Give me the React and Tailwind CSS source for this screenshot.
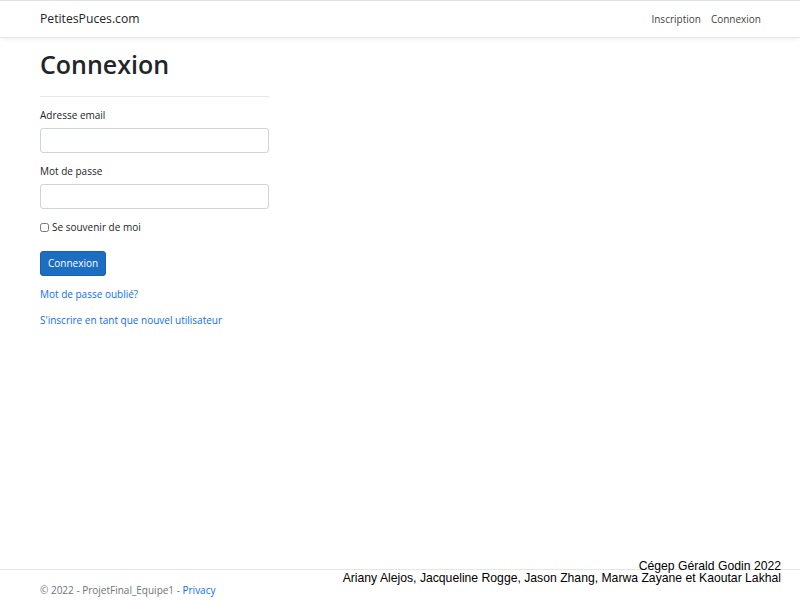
import React from "react";

export default function App() {
  return (
    <div className="relative min-h-[600px] flex flex-col bg-white text-[#212529] font-['Open_Sans',sans-serif]">
      <header className="h-[38px] border-t border-[#dee2e6] border-b border-b-[#e5e5e5] shadow-[0_2px_4px_rgba(0,0,0,0.05)] flex items-center justify-between pl-[40px] pr-[39px]">
        <span className="text-[12.2px] text-[#212529]">PetitesPuces.com</span>
        <nav className="flex gap-[10px] text-[10px] text-[#444]">
          <span>Inscription</span>
          <span>Connexion</span>
        </nav>
      </header>

      <main className="flex-1 px-[40px]">
        <div className="w-[229px]">
          <h1 className="text-[25px] font-semibold leading-none mt-[14px] mb-[19px]">Connexion</h1>
          <hr className="border-[#e7e7e7]" />
          <label className="block text-[10px] mt-[11px] mb-[5px]">Adresse email</label>
          <input className="w-full h-[25px] border border-[#ced4da] rounded-[3px]" />
          <label className="block text-[10px] mt-[11px] mb-[5px]">Mot de passe</label>
          <input type="password" className="w-full h-[25px] border border-[#ced4da] rounded-[3px]" />
          <label className="flex items-center gap-[3px] text-[10px] mt-[11px]">
            <input type="checkbox" className="w-[9px] h-[9px] m-0" />
            Se souvenir de moi
          </label>
          <button className="mt-[16px] h-[25px] px-[7px] rounded-[3px] bg-[#1b6ec2] border border-[#1861ac] text-white text-[10px]">
            Connexion
          </button>
          <a className="block text-[10px] text-[#0d6efd] mt-[11px]">Mot de passe oublié?</a>
          <a className="block text-[10px] text-[#0d6efd] mt-[11px]">S'inscrire en tant que nouvel utilisateur</a>
        </div>
      </main>

      <footer className="h-[31px] border-t border-[#e5e5e5] px-[40px] pt-[13px] text-[10px] text-[#6c757d]">
        <span>
          © 2022 - ProjetFinal_Equipe1 - <a className="text-[#0d6efd]">Privacy</a>
        </span>
      </footer>

      <div className="absolute right-[19px] top-[561px] text-right text-[12.2px] leading-[11.5px] text-black font-['Liberation_Sans',sans-serif]">
        <div>Cégep Gérald Godin 2022</div>
        <div>Ariany Alejos, Jacqueline Rogge, Jason Zhang, Marwa Zayane et Kaoutar Lakhal</div>
      </div>
    </div>
  );
}
